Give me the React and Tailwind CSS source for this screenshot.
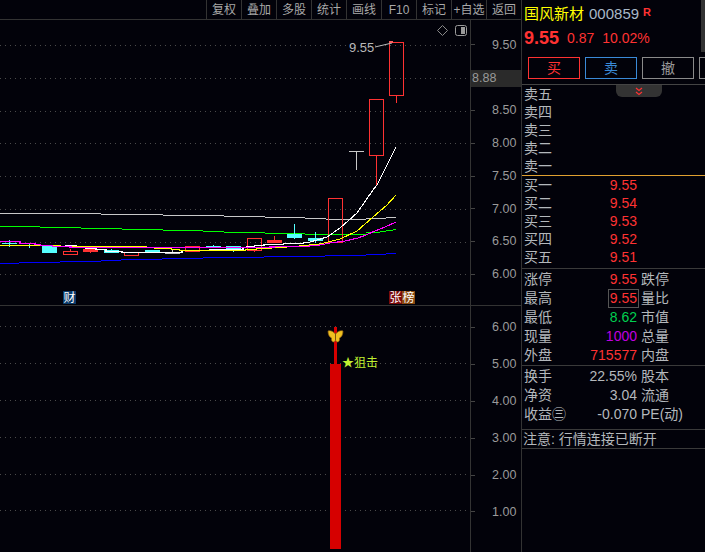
const FONT = "font-['Liberation_Sans','Noto_Sans_CJK_SC',sans-serif]";

const TOOLS = ["复权", "叠加", "多股", "统计", "画线", "F10", "标记", "+自选", "返回"];
const GRID_TOP = [45, 78, 111, 143, 176, 209, 242, 274];
const GRID_BOTTOM = [326, 363, 400, 437, 474, 510];

// moving averages: stepped part as [x1, x2, y]
const STEPS = {
  "#c8c8c8": [[0, 101, 213], [101, 163, 214], [163, 224, 215], [224, 265, 216], [265, 305, 217], [305, 326, 218], [326, 366, 219], [366, 386, 218], [386, 396, 217]],
  "#00ff00": [[0, 40, 226], [40, 81, 227], [81, 122, 228], [122, 163, 229], [163, 203, 230], [203, 224, 231], [224, 265, 232], [265, 305, 233], [305, 366, 234], [366, 380, 232], [380, 386, 231], [386, 393, 230], [393, 396, 229]],
  "#0000ff": [[0, 19, 263], [19, 60, 262], [60, 101, 261], [101, 121, 260], [121, 162, 259], [162, 203, 258], [203, 264, 257], [264, 325, 256], [325, 366, 255], [366, 386, 254], [386, 396, 253]],
};
// colour, points
const CURVES = [
  ["#ffffff", "65,245.5 76,245.5 76,247.5 86,247.5 86,248.5 96,248.5 96,249.5 106,249.5 106,251.5 122,251.5 122,252.5 182,252.5 182,250.5 243,249.5 243,247.5 259,245.5 269,244.5 283,244.5 284,243.5 300,243.5 310,242 317,240 327,237 340,228 357,213 373,190 377,185 396,147"],
  ["#ffff00", "0,245.5 60,245.5 60,246.5 122,246.5 142,246.5 158,248.5 168,248.5 183,250.5 240,250.5 262,248.5 280,247.5 300,246 320,244 340,239 357,231 373,217 387,205 396,195"],
  ["#ff00ff", "0,241.5 20,241.5 20,243.5 35,243.5 35,244.5 45,245.5 60,246.5 81,247.5 240,247.5 305,246.5 320,245 330,243 345,241 358,238 366,235 375,231 385,227 396,222"],
];

// x, body top, body bottom, wick top, wick bottom, colour, filled
const CANDLES = [
  [2, 243, 243, 240, 247, "#55ffff", true],
  [42, 246, 252, 246, 252, "#55ffff", true],
  [63, 251, 254, 249, 254, "#ff3232", false],
  [83, 249, 251, 249, 253, "#ff3232", true],
  [104, 250, 252, 249, 253, "#55ffff", true],
  [124, 252, 255, 252, 255, "#ff3232", false],
  [145, 250, 252, 250, 253, "#55ffff", true],
  [165, 252, 253, 250, 253, "#c8c8c8", true],
  [185, 246, 251, 246, 251, "#ff3232", false],
  [206, 246, 247, 245, 247, "#55ffff", true],
  [226, 246, 249, 246, 252, "#55ffff", true],
  [247, 238, 250, 238, 252, "#ff3232", false],
  [267, 240, 242, 236, 242, "#ff3232", true],
  [287, 234, 237, 224, 239, "#55ffff", true],
  [308, 238, 240, 232, 243, "#55ffff", true],
  [328, 198, 242, 198, 242, "#ff3232", false],
  [349, 151, 151, 151, 170, "#c8c8c8", true],
  [369, 99, 155, 99, 186, "#ff3232", false],
  [389, 42, 95, 42, 103, "#ff3232", false],
];

const SELLS = ["卖五", "卖四", "卖三", "卖二", "卖一"];
const BUYS = [["买一", "9.55"], ["买二", "9.54"], ["买三", "9.53"], ["买四", "9.52"], ["买五", "9.51"]];
const STATS = [
  ["涨停", "9.55", "跌停", "text-[#ff3232]"],
  ["最高", "9.55", "量比", "text-[#ff3232]"],
  ["最低", "8.62", "市值", "text-[#00d050]"],
  ["现量", "1000", "总量", "text-[#c000e0]"],
  ["外盘", "715577", "内盘", "text-[#ff3232]"],
];
const FINANCE = [
  ["换手", "22.55%", "股本"],
  ["净资", "3.04", "流通"],
  ["收益㊂", "-0.070", "PE(动)"],
];

const Grid = ({ rows }) =>
  rows.map((y) => (
    <line key={y} x1="0" x2="470" y1={y + 0.5} y2={y + 0.5} stroke="#4a4a4a" strokeDasharray="1 4" />
  ));

const Candle = ({ c }) => {
  const [x, top, bottom, wickTop, wickBottom, color, filled] = c;
  return (
    <g shapeRendering="crispEdges">
      <line x1={x + 7.5} x2={x + 7.5} y1={wickTop} y2={filled ? wickBottom : top} stroke={color} />
      <line x1={x + 7.5} x2={x + 7.5} y1={bottom} y2={wickBottom} stroke={color} />
      {top === bottom ? (
        <line x1={x} x2={x + 15} y1={top + 0.5} y2={top + 0.5} stroke={color} />
      ) : (
        <rect x={x + 0.5} y={top + 0.5} width="14" height={bottom - top} fill={filled ? color : "none"} stroke={color} />
      )}
    </g>
  );
};

const TopChart = () => (
  <svg width="470" height="285" viewBox="0 20 470 285" className="block">
    <Grid rows={GRID_TOP} />
    <g shapeRendering="crispEdges">
      {Object.entries(STEPS).map(([color, segs]) =>
        segs.map(([a, b, y]) => <line key={color + a} x1={a} x2={b} y1={y + 0.5} y2={y + 0.5} stroke={color} strokeWidth="1.4" />)
      )}
      <line x1="29.5" x2="29.5" y1="244" y2="248" stroke="#55ffff" />
    </g>
    {CANDLES.map((c) => <Candle key={c[0]} c={c} />)}
    {CURVES.map(([color, pts]) => (
      <polyline key={color} points={pts} fill="none" stroke={color} strokeWidth="1.1" shapeRendering="crispEdges" />
    ))}
    <line x1="375" y1="47" x2="392" y2="43" stroke="#b8b8b8" />
    <rect x="389" y="41" width="4" height="2" fill="#ff6060" />
    <text x="349" y="52" fontSize="13" fill="#b8b8b8">9.55</text>
    {/* diamond + panel toggle */}
    <path d="M442.5 25.5l5 5-5 5-5-5z" fill="none" stroke="#8a8a8a" />
    <rect x="455.5" y="25.5" width="11" height="10" rx="2" fill="none" stroke="#9a9a9a" />
    <rect x="461" y="27" width="4" height="7" fill="#9a9a9a" />
  </svg>
);

const Tag = ({ children, className }) => (
  <span className={`flex h-[13px] w-[13px] items-center justify-center text-[12px] leading-none text-white ${className}`}>{children}</span>
);

const BottomChart = () => (
  <svg width="470" height="246" viewBox="0 306 470 246" className="block">
    <Grid rows={GRID_BOTTOM} />
    <g shapeRendering="crispEdges">
      <rect x="330" y="364" width="11" height="185" fill="#d60000" />
      <rect x="334" y="327" width="3" height="37" fill="#d60000" />
    </g>
    {/* butterfly */}
    <path d="M335.5 334C333 331 330 330 328 331C328 334 329 337 331.5 338C331 340 332 342 333.5 342C334.5 342 335 341 335.5 340C336 341 336.5 342 337.5 342C339 342 340 340 339.5 338C342 337 343 334 343 331C341 330 338 331 335.5 334z" fill="#f0c020" stroke="#8a5a10" strokeWidth="0.7" />
    <line x1="335.5" x2="335.5" y1="333" y2="340" stroke="#7a5010" />
    <text x="342" y="367" fontSize="12" fill="#c0f030" fontFamily="'Noto Sans CJK SC',sans-serif">★狙击</text>
  </svg>
);

const Axis = ({ children, className }) => (
  <div className={`w-[51px] border-l border-[#333] text-[12.5px] text-[#9a9a9a] ${className}`}>{children}</div>
);

const AxisRow = ({ value, className }) => (
  <div className={`flex items-center ${className}`}>
    <span className="h-px w-[4px] bg-[#444]" />
    <span className="ml-[17px]">{value}</span>
  </div>
);

const Row = ({ left, value, right, valueClass = "text-[#ff3232]", boxed, h = "h-[19px]" }) => (
  <div className={`flex items-center pl-[2px] ${h}`}>
    <span className="w-[50px] shrink-0 whitespace-nowrap">{left}</span>
    <span className={`w-[63px] shrink-0 text-right ${valueClass}`}>
      {boxed ? <span className="-mr-[2px] inline-block border border-[#555] px-px leading-[17px]">{value}</span> : value}
    </span>
    {right && <span className="ml-[4px] whitespace-nowrap">{right}</span>}
  </div>
);

export default function App() {
  return (
    <div className={`flex h-[552px] w-[705px] overflow-hidden bg-[#02020a] ${FONT}`}>
      <div className="flex w-[521px] shrink-0 flex-col">
        <div className="flex h-[20px] shrink-0 justify-end border-b border-[#333]">
          {TOOLS.map((t) => (
            <div key={t} className="flex w-[35px] items-center justify-center whitespace-nowrap border-l border-[#333] text-[12px] text-[#a8a8a8]">
              {t}
            </div>
          ))}
        </div>
        <div className="flex h-[286px] shrink-0 border-b border-[#333]">
          <div className="relative h-[285px] w-[470px] shrink-0">
            <TopChart />
            <div className="absolute left-[63px] top-[271px] flex">
              <Tag className="bg-[#0a3a6a]">财</Tag>
            </div>
            <div className="absolute left-[389px] top-[271px] flex">
              <Tag className="bg-[#7a0b0b]">张</Tag>
              <Tag className="bg-[#8a4a10]">榜</Tag>
            </div>
          </div>
          <Axis className="pt-[8.5px]">
            {["9.50", "8.88", "8.50", "8.00", "7.50", "7.00", "6.50", "6.00"].map((v) =>
              v === "8.88" ? (
                <div key={v} className="h-[32.8px] pt-[8.5px]">
                  <div className="h-[17px] bg-[#2a2a2a] pl-[1px] leading-[17px]">{v}</div>
                </div>
              ) : (
                <AxisRow key={v} value={v} className="h-[32.8px]" />
              )
            )}
          </Axis>
        </div>
        <div className="flex flex-1">
          <BottomChart />
          <Axis className="pt-[3px]">
            {["6.00", "5.00", "4.00", "3.00", "2.00", "1.00"].map((v) => (
              <AxisRow key={v} value={v} className="h-[36.9px]" />
            ))}
          </Axis>
        </div>
      </div>

      <div className="relative w-[184px] shrink-0 border-l border-[#333] text-[14px] text-[#b4b8bc]">
        <div className="flex h-[24px] items-end whitespace-nowrap pl-[2px] text-[15px] leading-[20px]">
          <span className="text-[#ffff00]">国风新材</span>
          <span className="ml-[5px] text-[#a8b8c8]">000859</span>
          <span className="mb-[6px] ml-[4px] text-[11px] font-bold leading-none text-[#ff3232]">R</span>
        </div>
        <div className="flex h-[28px] items-center whitespace-nowrap pl-[2px] text-[#ff3232]">
          <span className="text-[18px] font-bold">9.55</span>
          <span className="ml-[8px]">0.87</span>
          <span className="ml-[8px]">10.02%</span>
        </div>
        <div className="mt-[5px] flex gap-[5px] pl-[6px] text-[14px]">
          <div className="flex h-[22px] w-[52px] shrink-0 items-center justify-center border border-[#ff3232] text-[#ff3232]">买</div>
          <div className="flex h-[22px] w-[52px] shrink-0 items-center justify-center border border-[#3a8ad8] text-[#3a8ad8]">卖</div>
          <div className="flex h-[22px] w-[52px] shrink-0 items-center justify-center border border-[#8a8a8a] text-[#9a9a9a]">撤</div>
          <div className="h-[22px] w-[6px] shrink-0 border-y border-l border-[#8a8a8a]" />
        </div>
        <div className="absolute right-0 top-0 h-[52px] w-[4px] bg-[#333]" />

        <div className="mt-[5px] border-t border-[#444]">
          <div className="absolute left-[94px] top-[85px] flex h-[12px] w-[46px] items-center justify-center rounded-b-[6px] bg-[#333]">
            <svg width="10" height="9" viewBox="0 0 10 9" fill="none" stroke="#ff3232" strokeWidth="1.2">
              <path d="M2 1l3 2.5L8 1M2 5l3 2.5L8 5" />
            </svg>
          </div>
          {SELLS.map((s) => (
            <div key={s} className="flex h-[18px] items-center pl-[2px]">{s}</div>
          ))}
        </div>

        <div className="border-t border-[#e0a030]">
          {BUYS.map(([l, v]) => <Row key={l} left={l} value={v} h="h-[18px]" />)}
        </div>

        <div className="mt-[2px] border-t border-[#3a3a3a] pt-[1px]">
          {STATS.map(([l, v, r, cls], i) => (
            <Row key={l} left={l} value={v} right={r} valueClass={cls} boxed={i === 1} />
          ))}
        </div>

        <div className="border-t border-[#3a3a3a] pt-[1px]">
          {FINANCE.map(([l, v, r]) => <Row key={l} left={l} value={v} right={r} valueClass="text-[#b4b8bc]" />)}
        </div>

        <div className="mt-[5px] flex h-[18px] items-center whitespace-nowrap border-y border-[#3a3a3a] pl-[1px] box-content">注意: 行情连接已断开</div>
      </div>
    </div>
  );
}
